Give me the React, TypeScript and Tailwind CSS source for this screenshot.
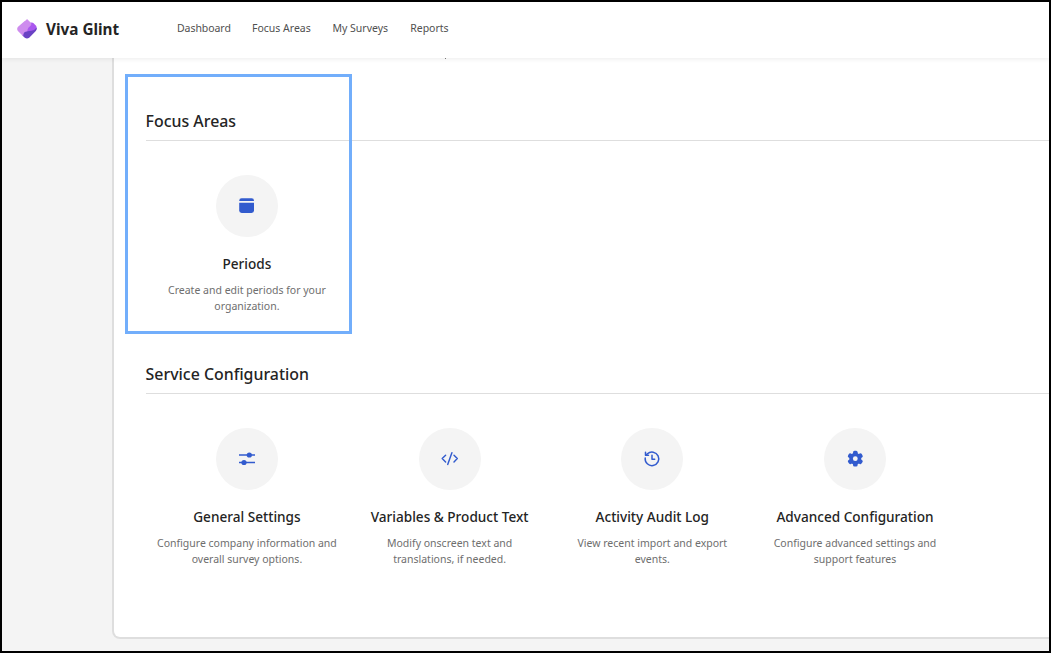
import type { ReactNode } from "react";

type Tile = { title: string; lines: [string, string]; icon: ReactNode };

function Logo() {
  return (
    <svg className="h-5 w-5 shrink-0" viewBox="0 0 20 20">
      <path d="M8 9L12.6 4.3Q14.8 2.8 16.6 4.3L18.8 6.5Q20.2 8.4 19.2 10.4L16 14L6 14Z" fill="#aa58ef" />
      <path d="M19.7 8.4Q20 10.6 18.8 12L12.2 18.8Q10 20.4 7.8 18.8L5.4 16.4Q5.4 13.2 8.8 12.6L14.5 11.7Q17.6 11.3 19.7 8.4Z" fill="#6a42c4" />
      <path d="M10 0L13.9 3.8Q14.8 5 13.8 6.4L11.4 8.8Q10.5 10 10.3 12.2L9 12.6Q6.3 13.2 6.2 17.2L.9 12Q-.5 10.2 .8 8L7.4 2.2Q9.3 1.2 10 0Z" fill="#ce8cee" />
    </svg>
  );
}

const calendar = (
  <svg className="h-4 w-4" viewBox="0 0 16 16" fill="#325bce">
    <path d="M.2 3.1V2.7Q.2.3 2.6.3H12.6Q15 .3 15 2.7V3.1Z" />
    <path d="M.2 4.8H15V12.6Q15 15 12.6 15H2.6Q.2 15 .2 12.6Z" />
  </svg>
);

const sliders = (
  <svg className="h-4 w-4" viewBox="0 0 16 16" fill="#325bce">
    <path d="M-.4 3.3H16V4.7H-.4ZM-.4 10.8H16V12.2H-.4Z" />
    <circle cx="10.3" cy="4" r="2.6" />
    <circle cx="5" cy="11.5" r="2.6" />
  </svg>
);

const code = (
  <svg className="h-[18px] w-[18px]" viewBox="0 0 18 18" fill="none" stroke="#325bce" strokeWidth="1.45" strokeLinecap="round" strokeLinejoin="round">
    <path d="M4.6 5.3L1.2 8.6L4.6 11.9M13 5.3L16.3 8.6L13 11.9M10.9 2.7L6.7 14.4" />
  </svg>
);

const history = (
  <svg className="h-[18px] w-[18px]" viewBox="0 0 18 18" fill="none" stroke="#325bce" strokeWidth="1.5" strokeLinecap="round" strokeLinejoin="round">
    <path d="M2.2 8.1A6.8 6.8 0 1 0 4.4 3.8L2.9 5.3" />
    <path d="M2.5 2.2V5.2H5.5M9 5.2V9.3H11.7" />
  </svg>
);

const gear = (
  <svg className="h-[18px] w-[18px]" viewBox="0 0 18 18">
    <g fill="#325bce">
      <circle cx="9.3" cy="8.7" r="6" />
      <rect x="7" y=".8" width="4.6" height="15.8" rx="1.5" />
      <rect x="7" y=".8" width="4.6" height="15.8" rx="1.5" transform="rotate(60 9.3 8.7)" />
      <rect x="7" y=".8" width="4.6" height="15.8" rx="1.5" transform="rotate(-60 9.3 8.7)" />
    </g>
    <circle cx="9.3" cy="8.7" r="2.4" fill="#f4f4f4" />
  </svg>
);

const focusTiles: Tile[] = [
  { title: "Periods", lines: ["Create and edit periods for your", "organization."], icon: calendar },
];

const serviceTiles: Tile[] = [
  { title: "General Settings", lines: ["Configure company information and", "overall survey options."], icon: sliders },
  { title: "Variables & Product Text", lines: ["Modify onscreen text and", "translations, if needed."], icon: code },
  { title: "Activity Audit Log", lines: ["View recent import and export", "events."], icon: history },
  { title: "Advanced Configuration", lines: ["Configure advanced settings and", "support features"], icon: gear },
];

function TileCard({ tile }: { tile: Tile }) {
  return (
    <div className="flex w-[202.7px] shrink-0 flex-col items-center whitespace-nowrap text-center">
      <div className="flex h-[62px] w-[62px] items-center justify-center rounded-full bg-[#f4f4f4]">{tile.icon}</div>
      <h3 className="mt-[17px] text-[13.6px] font-[550] leading-5 text-[#242424]">{tile.title}</h3>
      <p className="mt-2 text-[10.5px] leading-4 text-[#6e6e6e]">
        {tile.lines[0]}
        <br />
        {tile.lines[1]}
      </p>
    </div>
  );
}

function Section({ title, tiles, className }: { title: string; tiles: Tile[]; className: string }) {
  return (
    <section className={className}>
      <h2 className="h-[30px] border-b border-[#dedede] text-[15.9px] font-[540] leading-5 text-[#242424]">{title}</h2>
      <div className="mt-[34px] flex">
        {tiles.map((t) => (
          <TileCard key={t.title} tile={t} />
        ))}
      </div>
    </section>
  );
}

export default function App() {
  return (
    <div className="relative flex h-[653px] w-[1051px] flex-col overflow-hidden border-2 border-black bg-[#f4f4f4] font-['Noto_Sans','Open_Sans',sans-serif]">
      <header className="z-10 flex h-14 shrink-0 items-center bg-white pb-[2px] pl-[15px] shadow-[0_1px_5px_rgba(0,0,0,0.08)]">
        <Logo />
        <span className="ml-[9px] w-[131px] whitespace-nowrap text-[15.3px] font-bold leading-5 text-[#242424]">Viva Glint</span>
        <nav className="flex -translate-y-px whitespace-nowrap text-[10.5px] leading-4 text-[#505050]">
          <a className="w-[75px] tracking-[-0.06px]">Dashboard</a>
          <a className="w-[80.5px]">Focus Areas</a>
          <a className="w-[77.7px]">My Surveys</a>
          <a>Reports</a>
        </nav>
      </header>
      <main className="flex min-h-0 flex-1 pl-[110px]">
        <div className="-mr-3 h-[581px] flex-1 rounded-bl-lg border-2 border-t-0 border-[#dedede] bg-white pl-[31.6px]">
          <Section title="Focus Areas" tiles={focusTiles} className="pt-[53px]" />
          <Section title="Service Configuration" tiles={serviceTiles} className="pt-[50px]" />
        </div>
      </main>
      <div className="absolute left-[443px] top-[56px] z-20 h-px w-px bg-[#777777]" />
      <div className="absolute left-[123px] top-[72px] h-[260px] w-[227px] border-[3px] border-[#72aefb]" />
    </div>
  );
}
